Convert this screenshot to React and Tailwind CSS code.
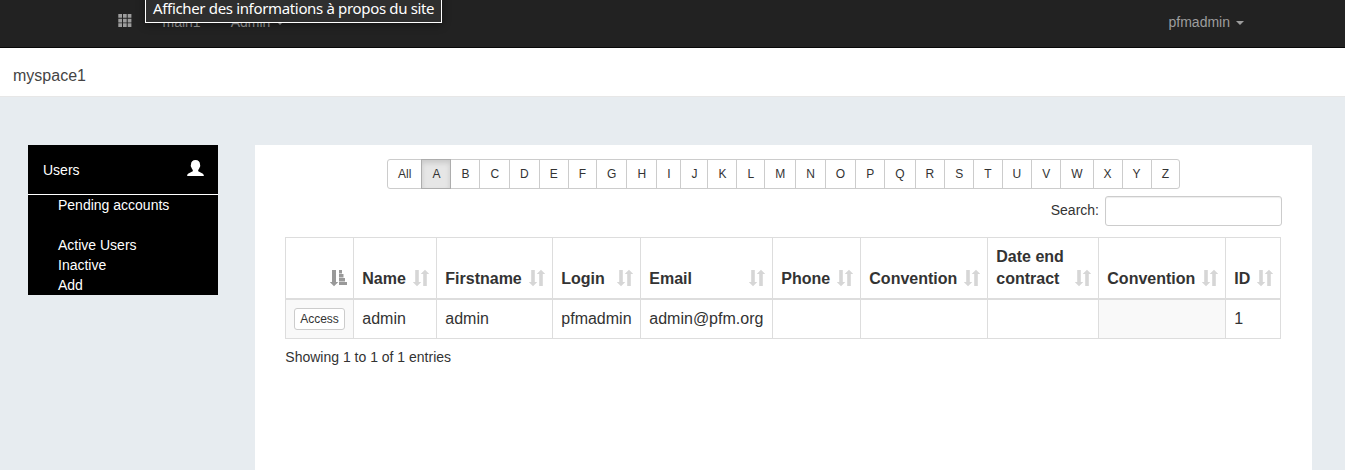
const letters = ["All", ..."ABCDEFGHIJKLMNOPQRSTUVWXYZ"];

const columns = [
  { title: "", value: null, shaded: true },
  { title: "Name", value: "admin" },
  { title: "Firstname", value: "admin" },
  { title: "Login", value: "pfmadmin" },
  { title: "Email", value: "admin@pfm.org" },
  { title: "Phone", value: "" },
  { title: "Convention", value: "" },
  { title: "Date end contract", value: "" },
  { title: "Convention", value: "", shaded: true },
  { title: "ID", value: "1" },
];

function SortIcon() {
  return (
    <svg className="h-[18px] w-4 shrink-0 fill-[#d6d6d6]" viewBox="0 0 16 18">
      <path d="M2.200 1h3.600v12h2.500L4 17.200-.3 13H2.200zM12 .8 16.300 5H13.800v12h-3.600V5H7.700z" />
    </svg>
  );
}

function SortAscIcon() {
  return (
    <svg className="h-[18px] w-[17px] shrink-0 fill-[#999]" viewBox="0 0 17 18">
      <path d="M2 1h4v12h2.300L4 17.200-.3 13H2zM9 1h3v3H9zM9 5h4.500v3H9zM9 9h6v3H9zM9 13h8v3H9z" />
      <path className="opacity-50" d="M9 4h3v1H9zM9 8h4.500v1H9zM9 12h6v1H9z" />
    </svg>
  );
}

function Caret() {
  return (
    <span className="ml-[6px] inline-block border-x-4 border-t-4 border-x-transparent border-t-[#9d9d9d] align-middle" />
  );
}

function Navbar() {
  return (
    <nav className="relative flex h-12 items-start border-b border-[#080808] bg-[#222] pl-[118px] text-[14px] leading-5 text-[#9d9d9d]">
      <svg className="mt-[14px] h-[13px] w-[14px] fill-[#9d9d9d]" viewBox="0 0 14 13">
        <path d="M.3 0h3.700v3.700H.3zM5 0h3.700v3.700H5zM9.700 0h3.700v3.700H9.700zM.3 4.700h3.700v3.700H.3zM5 4.700h3.700v3.700H5zM9.700 4.700h3.700v3.700H9.700zM.3 9.300h3.700V13H.3zM5 9.300h3.700V13H5zM9.700 9.300h3.700V13H9.700z" />
      </svg>
      <span className="mt-3 ml-[30.5px]">main1</span>
      <span className="mt-3 ml-[30px]">
        Admin
        <Caret />
      </span>
      <span className="mt-3 mr-[101px] ml-auto">
        pfmadmin
        <Caret />
      </span>
      <div className="absolute -top-2 left-[145px] h-[31px] w-[297px] border border-white bg-[#2f2f2f] pt-1 pl-[7px] font-['Noto_Sans',sans-serif] text-[15px] leading-[22px] tracking-[-0.34px] whitespace-nowrap text-white shadow-[0_2px_8px_rgba(0,0,0,0.4)]">
        Afficher des informations à propos du site
      </div>
    </nav>
  );
}

function Sidebar() {
  return (
    <aside className="h-[150px] w-[190px] bg-black text-[14px] leading-5 text-white">
      <div className="flex h-[50px] justify-between border-b border-white pt-[15px] pr-[14px] pl-[15px]">
        <span>Users</span>
        <svg className="h-[17px] w-[17px] fill-white" viewBox="0 0 17 17">
          <path d="M8.500 0c2.800 0 4.500 1.600 4.500 4.300 0 .7.400 1 .2 1.900-.1.700-.5 1-.7 1.500-.3 1-.8 1.700-1.300 2.300v1c.4 1 5.400 2.100 5.600 4.300V16H.2v-.7c.2-2.200 5.200-3.300 5.600-4.300v-1c-.5-.6-1-1.300-1.300-2.300-.2-.5-.6-.8-.7-1.500-.2-.9.200-1.200.2-1.900C4 1.600 5.700 0 8.500 0z" />
        </svg>
      </div>
      <ul className="pl-[30px]">
        <li className="mb-5">Pending accounts</li>
        <li>Active Users</li>
        <li>Inactive</li>
        <li>Add</li>
      </ul>
    </aside>
  );
}

function LetterFilter() {
  return (
    <div className="flex justify-center text-[12px] leading-[18px]">
      {letters.map((letter) => (
        <button
          key={letter}
          className={
            letter === "A"
              ? "relative -ml-px h-[30px] border border-[#adadad] bg-[#e6e6e6] px-[10px] shadow-[inset_0_3px_5px_rgba(0,0,0,0.125)]"
              : "-ml-px h-[30px] border border-[#ccc] bg-white px-[10px] first:ml-0 first:rounded-l-[3px] last:rounded-r-[3px]"
          }
        >
          {letter}
        </button>
      ))}
    </div>
  );
}

function UsersTable() {
  return (
    <table className="mt-[11px] ml-[30px] w-[996px] table-fixed border-separate border-spacing-0 border-t border-l border-[#ddd] text-[16px] leading-[22px]">
      <colgroup>
        <col className="w-[68px]" />
        <col className="w-[83px]" />
        <col className="w-[116px]" />
        <col className="w-[88px]" />
        <col className="w-[132px]" />
        <col className="w-[88px]" />
        <col className="w-[127px]" />
        <col className="w-[111px]" />
        <col className="w-[127px]" />
        <col className="w-[55px]" />
      </colgroup>
      <thead>
        <tr>
          {columns.map((column, i) => (
            <th
              key={i}
              className="h-[62px] border-r border-b-2 border-[#ddd] p-0 pr-[7px] pb-2 pl-[8.3px] text-left align-bottom font-bold"
            >
              <div className="flex items-end justify-between">
                <span>{column.title}</span>
                <div className={i === 0 ? "-mr-px mb-[3px]" : "mb-[3px] -ml-1"}>
                  {i === 0 ? <SortAscIcon /> : <SortIcon />}
                </div>
              </div>
            </th>
          ))}
        </tr>
      </thead>
      <tbody>
        <tr>
          {columns.map((column, i) => (
            <td
              key={i}
              className={
                column.shaded
                  ? "h-[39px] border-r border-b border-[#ddd] bg-[#f9f9f9] p-0 pl-2"
                  : "h-[39px] border-r border-b border-[#ddd] p-0 pl-[8.3px]"
              }
            >
              {i === 0 ? (
                <button className="block h-[22px] w-[51px] rounded-[3px] border border-[#ccc] bg-white text-[12px] leading-[18px]">
                  Access
                </button>
              ) : (
                column.value
              )}
            </td>
          ))}
        </tr>
      </tbody>
    </table>
  );
}

export default function App() {
  return (
    <div className="h-[470px] w-[1345px] overflow-hidden bg-[#e7ecf0] font-['Liberation_Sans',Arial,sans-serif] text-[#333]">
      <Navbar />
      <header className="h-[49px] border-b border-[#e7e7e7] bg-white pt-[18px] pl-[13px] text-[16px] leading-5 text-[#444]">
        myspace1
      </header>
      <div className="flex gap-[37px] pt-12 pl-7">
        <Sidebar />
        <main className="h-[325px] w-[1057px] bg-white pt-[14px]">
          <LetterFilter />
          <div className="mt-[7px] flex justify-end pr-[30px] text-[14px] leading-5">
            <label className="flex">
              <span className="mt-1 mr-[6px]">Search:</span>
              <input className="h-[30px] w-[177px] rounded-[3px] border border-[#ccc] bg-white shadow-[inset_0_1px_1px_rgba(0,0,0,0.075)]" />
            </label>
          </div>
          <UsersTable />
          <p className="mt-2 ml-[30.3px] text-[14px] leading-5">Showing 1 to 1 of 1 entries</p>
        </main>
      </div>
    </div>
  );
}
